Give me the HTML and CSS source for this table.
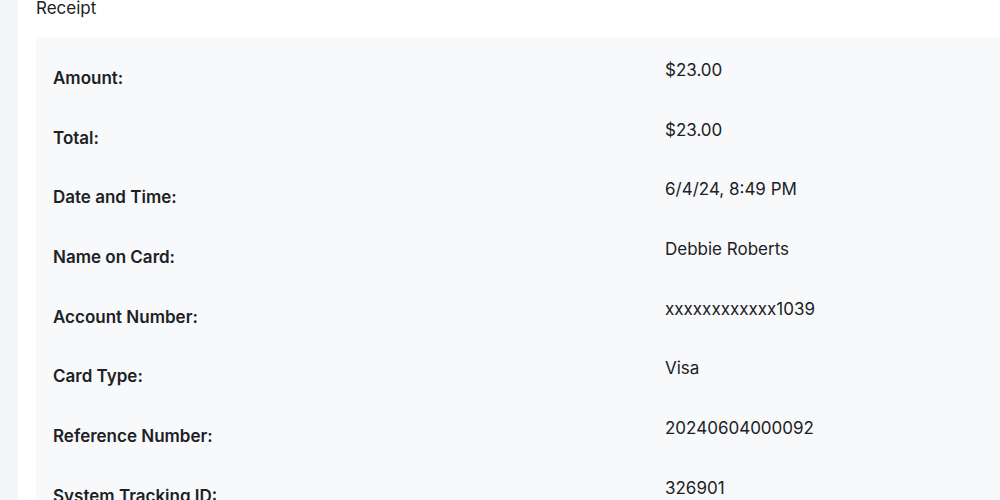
FILE: index.html
```html
<!DOCTYPE html>
<html>
<head>
<meta charset="utf-8">
<link rel="stylesheet" href="styles.css">
</head>
<body>
<div class="layout">
  <aside class="rail"></aside>
  <main class="panel">
    <h2 class="title">Receipt</h2>
    <section class="card">
      <div class="row"><div class="label">Amount:</div><div class="value">$23.00</div></div>
      <div class="row"><div class="label">Total:</div><div class="value">$23.00</div></div>
      <div class="row"><div class="label">Date and Time:</div><div class="value">6/4/24, 8:49 PM</div></div>
      <div class="row"><div class="label">Name on Card:</div><div class="value">Debbie Roberts</div></div>
      <div class="row"><div class="label">Account Number:</div><div class="value">xxxxxxxxxxxx1039</div></div>
      <div class="row"><div class="label">Card Type:</div><div class="value">Visa</div></div>
      <div class="row"><div class="label">Reference Number:</div><div class="value">20240604000092</div></div>
      <div class="row"><div class="label">System Tracking ID:</div><div class="value">326901</div></div>
    </section>
  </main>
</div>
</body>
</html>
```
FILE: styles.css
```css
html, body {
  margin: 0;
  padding: 0;
  background: #ffffff;
  overflow: hidden;
}
body {
  font-family: Inter, "Noto Sans", "Liberation Sans", sans-serif;
  font-size: 17px;
  color: #202124;
}
.layout {
  display: flex;
  height: 500px;
}
.rail {
  width: 18px;
  flex: none;
  background: #f4f5f7;
}
.panel {
  flex: 1;
  padding-left: 18px;
  min-width: 0;
}
.title {
  margin: -4px 0 18px;
  font-size: 17px;
  font-weight: 400;
  line-height: 24px;
}
.card {
  width: 1300px;
  background: #f8f9fb;
  border-radius: 4px;
  padding: 20px 17px;
}
.row {
  display: grid;
  grid-template-columns: 612px 1fr;
  height: 59.67px;
}
.label {
  font-weight: 600;
  line-height: 24px;
  margin-top: 8px;
}
.value {
  line-height: 24px;
}
```
